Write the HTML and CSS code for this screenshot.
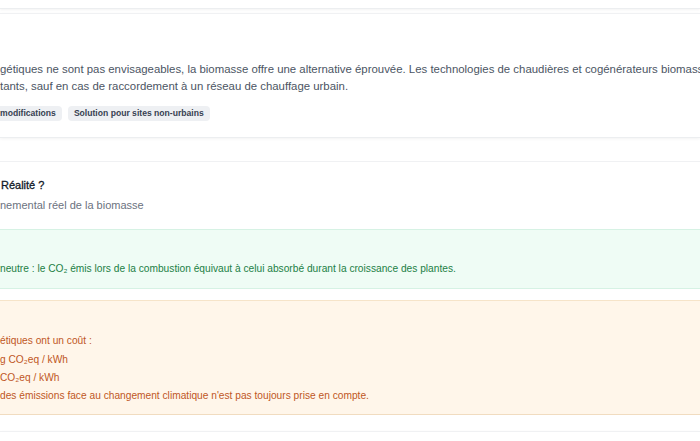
FILE: index.html
```html
<!DOCTYPE html>
<html lang="fr">
<head>
<meta charset="utf-8">
<title>Biomasse</title>
<link rel="stylesheet" href="styles.css">
</head>
<body>
<div class="page">
  <div class="card card-prev"></div>

  <section class="card card-solution">
    <p class="desc">gétiques ne sont pas envisageables, la biomasse offre une alternative éprouvée. Les technologies de chaudières et cogénérateurs biomasse<br>tants, sauf en cas de raccordement à un réseau de chauffage urbain.</p>
    <div class="tags">
      <span class="tag tag-first">modifications</span>
      <span class="tag">Solution pour sites non-urbains</span>
    </div>
  </section>

  <section class="card card-reality">
    <header class="reality-head">
      <h3 class="reality-title">Réalité ?</h3>
      <p class="reality-sub">nemental réel de la biomasse</p>
    </header>
    <div class="box box-green">
      <p>neutre : le CO₂ émis lors de la combustion équivaut à celui absorbé durant la croissance des plantes.</p>
    </div>
    <div class="box box-orange">
      <p>étiques ont un coût :</p>
      <p>g CO₂eq / kWh</p>
      <p>CO₂eq / kWh</p>
      <p>des émissions face au changement climatique n'est pas toujours prise en compte.</p>
    </div>
  </section>

  <div class="card card-next"></div>
</div>
</body>
</html>
```

FILE: styles.css
```css
html, body {
  margin: 0;
  padding: 0;
  background: #ffffff;
}
body {
  width: 700px;
  height: 441px;
  overflow: hidden;
  font-family: "Liberation Sans", Arial, sans-serif;
  -webkit-font-smoothing: antialiased;
}
.page {
  display: flex;
  flex-direction: column;
}
.card {
  background: #fff;
  border-top: 1px solid #f0f1f3;
  border-bottom: 1px solid #eceef0;
  box-shadow: 0 1px 3px rgba(0, 0, 0, 0.05);
}
.card-prev {
  height: 8px;
  border-top: none;
}
.card-solution {
  margin-top: 4px;
  padding: 47px 0 16px;
}
.desc {
  margin: 0;
  font-size: 11.4px;
  line-height: 17px;
  color: #4b5563;
  white-space: nowrap;
}
.tags {
  display: flex;
  gap: 6px;
  margin-top: 11px;
}
.tag {
  background: #eef0f3;
  color: #374151;
  font-size: 8.6px;
  font-weight: 700;
  line-height: 15px;
  padding: 0 6px;
  border-radius: 4px;
}
.tag-first {
  margin-left: -6px;
}
.card-reality {
  margin-top: 23px;
  border-bottom: none;
  box-shadow: none;
}
.reality-head {
  padding: 15px 0 16px;
}
.reality-title {
  margin: 0 0 0 1px;
  font-size: 11px;
  font-weight: 400;
  line-height: 16px;
  color: #111827;
  -webkit-text-stroke: 0.3px #111827;
}
.reality-sub {
  margin: 4px 0 0;
  font-size: 11px;
  line-height: 16px;
  color: #6b7280;
}
.box p {
  margin: 0;
  font-size: 10.2px;
  line-height: 18.3px;
  white-space: nowrap;
}
.box-green {
  background: #effcf5;
  border-top: 1px solid #d6f2e4;
  border-bottom: 1px solid #d6f2e4;
  padding: 30px 0 10px;
  color: #1c7f45;
}
.box-orange {
  margin-top: 11px;
  background: #fff6ea;
  border-top: 1px solid #f6e4c9;
  border-bottom: 1px solid #f1dcc0;
  padding: 31px 0 9px;
  color: #c0561f;
}
.card-next {
  margin-top: 16px;
  height: 30px;
  border-bottom: none;
}
```
